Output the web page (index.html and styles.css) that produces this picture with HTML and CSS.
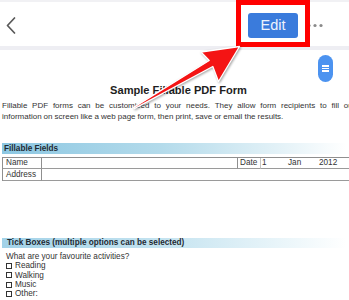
FILE: index.html
```html
<!DOCTYPE html>
<html>
<head>
<meta charset="utf-8">
<link rel="stylesheet" href="styles.css">
</head>
<body>
<div class="app">
  <header class="toolbar">
    <button class="back" aria-label="Back">
      <svg width="10" height="17" viewBox="0 0 10 17"><polyline points="8.5,1 1.5,8.5 8.5,16" fill="none" stroke="#595959" stroke-width="1.7" stroke-linecap="round" stroke-linejoin="round"/></svg>
    </button>
    <button class="edit">Edit</button>
    <svg class="more" width="16" height="5" viewBox="0 0 16 5"><circle cx="2" cy="2.5" r="1.6" fill="#8a8a8a"/><circle cx="8" cy="2.5" r="1.6" fill="#8a8a8a"/><circle cx="14" cy="2.5" r="1.6" fill="#8a8a8a"/></svg>
  </header>

  <main class="doc">
    <h1 class="title">Sample Fillable PDF Form</h1>
    <p class="intro"><span class="line1">Fillable PDF forms can be customized to your needs. They allow form recipients to fill out</span><span class="line2">information on screen like a web page form, then print, save or email the results.</span></p>

    <h2 class="bar">Fillable Fields</h2>
    <div class="fields">
      <div class="cell">Name</div>
      <div class="cell"></div>
      <div class="cell date-label">Date</div>
      <div class="cell date-value"><span class="d">1</span><span class="m">Jan</span><span class="y">2012</span></div>
      <div class="cell row2">Address</div>
      <div class="cell row2 wide"></div>
    </div>

    <h2 class="bar bar-tick">Tick Boxes (multiple options can be selected)</h2>
    <p class="question">What are your favourite activities?</p>
    <ul class="checks">
      <li><span class="box"></span>Reading</li>
      <li><span class="box"></span>Walking</li>
      <li><span class="box"></span>Music</li>
      <li><span class="box"></span>Other:</li>
    </ul>
  </main>

  <div class="fab"><span></span><span></span><span></span></div>
  <div class="callout"></div>
  <svg class="arrow" width="349" height="300" viewBox="0 0 349 300">
    <polygon points="133.65,107.4 209.2,60.5 201,52 239.5,46.5 218.5,81.5 212.8,66.5 134.35,108.6" fill="#f41414" stroke="#ffffff" stroke-width="1.3" stroke-linejoin="round"/>
  </svg>
</div>
</body>
</html>
```

FILE: styles.css
```css
html, body {
  margin: 0;
  padding: 0;
  overflow: hidden;
  background: #ffffff;
}

.app {
  position: relative;
  width: 349px;
  height: 300px;
  overflow: hidden;
  font-family: "Liberation Sans", Arial, sans-serif;
  color: #2b2b2b;
}

.toolbar {
  display: flex;
  align-items: center;
  height: 41px;
  padding: 3px 26px 0 0;
  border-top: 2px solid #f1f1f4;
  border-bottom: 4px solid #eeeef3;
  background: #ffffff;
}

.back {
  display: flex;
  margin-left: 6px;
  padding: 0;
  border: 0;
  background: none;
}

.edit {
  margin-left: auto;
  width: 50px;
  height: 25px;
  padding: 0;
  border: 0;
  border-radius: 3px;
  background: #3a7bdc;
  color: #eef3fc;
  font-family: "Liberation Sans", Arial, sans-serif;
  font-size: 14.5px;
  line-height: 25px;
}

.more {
  margin-left: 9px;
}

.doc {
  width: 357px;
}

.title {
  margin: 34px 0 0;
  font-size: 11.1px;
  line-height: 13px;
  font-weight: bold;
  text-align: center;
  color: #1e1e1e;
}

.intro {
  margin: 3px 0 0 2px;
  font-size: 8px;
  line-height: 11px;
  color: #333;
}

.intro .line1 {
  display: block;
  white-space: nowrap;
  word-spacing: 2.55px;
}

.intro .line2 {
  display: block;
  white-space: nowrap;
  word-spacing: -0.2px;
}

.bar {
  margin: 21px 0 0 2px;
  height: 11px;
  padding-left: 2px;
  font-size: 8.2px;
  line-height: 11px;
  font-weight: bold;
  color: #1f2a33;
  background: linear-gradient(to right, #8cc7e2 0%, #b4dbeb 45%, #e6f3f8 80%, #ffffff 97%);
}

.bar-tick {
  margin-top: 57px;
  height: 10px;
  line-height: 10px;
  padding-left: 5px;
  background: linear-gradient(to right, #a2d2e8 0%, #c4e3f0 45%, #ebf6fa 80%, #ffffff 97%);
}

.fields {
  display: grid;
  grid-template-columns: 39px 196px 23px 1fr;
  grid-template-rows: 11px 12px;
  width: 354px;
  margin: 3px 0 0 2px;
  border-top: 1px solid #8f8f8f;
  border-left: 1px solid #8f8f8f;
  font-size: 8.2px;
  line-height: 10px;
  color: #333;
}

.cell {
  box-sizing: border-box;
  padding-left: 3px;
  border-right: 1px solid #8f8f8f;
  border-bottom: 1px solid #9a9a9a;
  white-space: nowrap;
}

.row2 {
  line-height: 11px;
}

.wide {
  grid-column: 2 / 5;
  border-right: 0;
}

.date-label {
  padding-left: 2px;
  border-right-color: #c4c4c4;
}

.date-value {
  display: flex;
  padding-left: 1px;
  border-right: 0;
}

.date-value .d {
  width: 26px;
}

.date-value .m {
  width: 31px;
}

.question {
  margin: 4px 0 0 6px;
  font-size: 8.2px;
  line-height: 9.3px;
  color: #333;
}

.checks {
  margin: 0;
  padding: 0 0 0 6px;
  list-style: none;
  font-size: 8.2px;
  line-height: 9.3px;
  color: #333;
}

.checks li {
  display: flex;
  align-items: center;
}

.box {
  box-sizing: border-box;
  width: 6px;
  height: 6px;
  margin-right: 3px;
  border: 1px solid #333;
}

.fab {
  position: absolute;
  left: 318px;
  top: 55px;
  width: 15px;
  height: 27px;
  border-radius: 7.5px;
  background: #4c93f0;
  display: flex;
  flex-direction: column;
  align-items: center;
  justify-content: center;
  gap: 1.3px;
}

.fab span {
  width: 7px;
  height: 1.4px;
  background: #ffffff;
}

.callout {
  position: absolute;
  left: 236px;
  top: 0;
  width: 74px;
  height: 47px;
  box-sizing: border-box;
  border: 5px solid #ff0000;
}

.arrow {
  position: absolute;
  left: 0;
  top: 0;
  pointer-events: none;
  filter: drop-shadow(1px 1.5px 1px rgba(0, 0, 0, 0.35));
}
```
